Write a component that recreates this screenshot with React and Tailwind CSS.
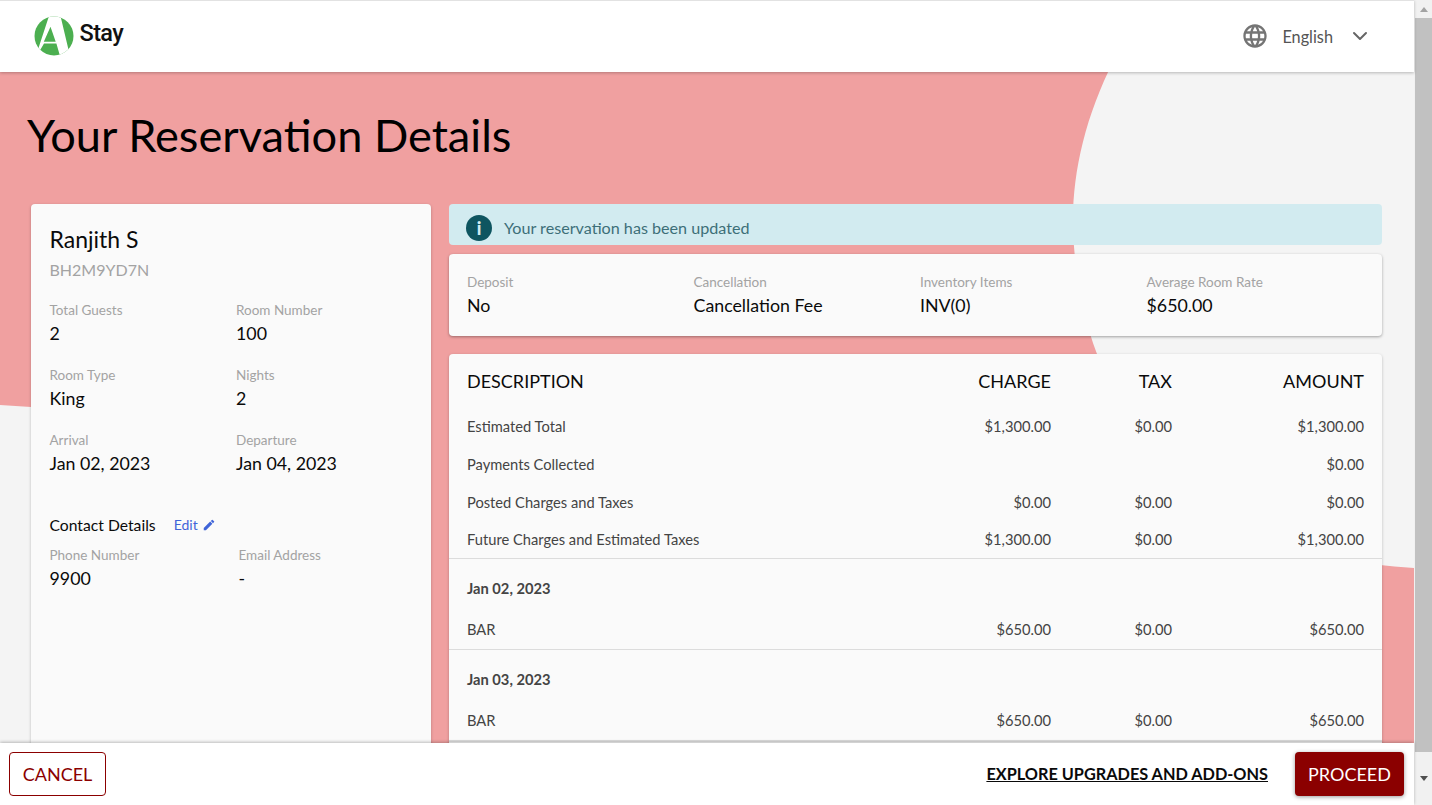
import { ChevronDown } from 'lucide-react'
import { MdEdit, MdLanguage } from 'react-icons/md'

const totals = [
  { label: 'Estimated Total', charge: '$1,300.00', tax: '$0.00', amount: '$1,300.00' },
  { label: 'Payments Collected', charge: '', tax: '', amount: '$0.00' },
  { label: 'Posted Charges and Taxes', charge: '$0.00', tax: '$0.00', amount: '$0.00' },
  { label: 'Future Charges and Estimated Taxes', charge: '$1,300.00', tax: '$0.00', amount: '$1,300.00' },
]

const days = ['Jan 02, 2023', 'Jan 03, 2023']

const summary = [
  { label: 'Deposit', value: 'No' },
  { label: 'Cancellation', value: 'Cancellation Fee' },
  { label: 'Inventory Items', value: 'INV(0)' },
  { label: 'Average Room Rate', value: '$650.00' },
]

function Field({ label, value, className = '' }) {
  return (
    <div className={className}>
      <div className="text-[13.5px] leading-[18px] text-[#a3a3a3]">{label}</div>
      <div className="mt-[1px] text-[17.8px] leading-[27px] text-[#0a0a0a]">{value}</div>
    </div>
  )
}

function Row({ label, charge, tax, amount }) {
  return (
    <div className="grid grid-cols-[1fr_140px_121px_192px] text-[14.7px] leading-[22px] text-[#444]">
      <div>{label}</div>
      <div className="text-right">{charge}</div>
      <div className="text-right">{tax}</div>
      <div className="text-right">{amount}</div>
    </div>
  )
}

function Logo() {
  return (
    <svg width="40" height="40" viewBox="0 0 40 40">
      <defs>
        <clipPath id="logo-disc">
          <circle cx="20" cy="20" r="19.5" />
        </clipPath>
      </defs>
      <circle cx="20" cy="20" r="19.5" fill="#4caf50" />
      <path
        clipPath="url(#logo-disc)"
        d="M15 0 L26.5 0 L36 40 L26 40 L22.4 27.5 L10 27.5 L5.6 35 L4.5 32 Z M16.5 10.7 L9.8 25.7 L21.7 25.7 Z"
        fill="#fff"
        fillRule="evenodd"
      />
    </svg>
  )
}

export default function App() {
  return (
    <div className="flex h-[805px] w-[1432px] overflow-hidden bg-[#f4f4f4] font-['Lato','Liberation_Sans',sans-serif]">
      <div className="relative flex w-[1414px] flex-col">
        <svg className="absolute left-0 top-0" width="1414" height="805" viewBox="0 0 1414 805">
          <path
            d="M0 60 H1114 C1086 115 1073 170 1073 220 C1073 270 1084 320 1097 354 C1140 480 1260 560 1414 568 V805 H31 V407 L0 405 Z"
            fill="#f0a0a0"
          />
        </svg>

        <header className="relative z-10 flex h-[72px] items-center justify-between border-t border-[#e2e2e2] bg-white pb-[2px] pl-[33.5px] pr-[42px] shadow-[0_1px_3px_rgba(0,0,0,0.25)]">
          <div className="flex items-center gap-[6px]">
            <Logo />
            <span className="mb-[3px] font-['Roboto',sans-serif] text-[23.5px] font-medium tracking-[-0.6px] text-[#111]">Stay</span>
          </div>
          <div className="flex items-center">
            <MdLanguage size={28} className="text-[#757575]" />
            <span className="ml-[13.5px] mt-[3px] text-[16.3px] text-[#555]">English</span>
            <ChevronDown size={24} strokeWidth={2} className="ml-[15px] text-[#666]" />
          </div>
        </header>

        <div className="relative min-h-0 flex-1 overflow-hidden">
          <h1 className="pl-[27px] pt-[31px] text-[45.2px] font-normal leading-[64px] text-black">Your Reservation Details</h1>

          <div className="mt-[37px] flex items-start gap-[18px] pl-[31px] pr-[32px]">
            <div className="h-[600px] w-[400px] shrink-0 rounded bg-[#fafafa] pl-[18.5px] pr-[18px] pt-[21px] shadow-[0_1px_3px_rgba(0,0,0,0.25)]">
              <div className="text-[23px] leading-[28px] text-[#0a0a0a]">Ranjith S</div>
              <div className="mt-[5px] text-[16px] leading-[24px] text-[#a3a3a3]">BH2M9YD7N</div>
              <div className="mt-[19px] grid grid-cols-[186.5px_1fr] gap-y-[19px]">
                <Field label="Total Guests" value="2" />
                <Field label="Room Number" value="100" />
                <Field label="Room Type" value="King" />
                <Field label="Nights" value="2" />
                <Field label="Arrival" value="Jan 02, 2023" />
                <Field label="Departure" value="Jan 04, 2023" />
              </div>
              <div className="mt-[37px] flex items-center">
                <span className="text-[15.7px] leading-[22px] text-[#0a0a0a]">Contact Details</span>
                <span className="ml-[18px] text-[14px] leading-[22px] text-[#3f64d8]">Edit</span>
                <MdEdit size={14} className="ml-[4px] text-[#3f64d8]" />
              </div>
              <div className="mt-[10px] grid grid-cols-[189px_1fr]">
                <Field label="Phone Number" value="9900" />
                <Field label="Email Address" value="-" />
              </div>
            </div>

            <div className="min-w-0 flex-1">
              <div className="flex h-[41px] items-center rounded bg-[#d2ebf0] pl-[17px] pt-[7px]">
                <div className="flex h-[26px] w-[26px] items-center justify-center rounded-full bg-[#0e5560] text-[18px] font-black text-[#d2ebf0]">i</div>
                <span className="ml-[12px] text-[16.15px] text-[#3d6f78]">Your reservation has been updated</span>
              </div>

              <div className="mt-[9px] grid h-[82px] grid-cols-[226.5px_226.5px_226.5px_1fr] rounded bg-[#fafafa] px-[18px] pt-[18.5px] shadow-[0_1px_3px_rgba(0,0,0,0.35)]">
                {summary.map((s) => (
                  <Field key={s.label} label={s.label} value={s.value} />
                ))}
              </div>

              <div className="mt-[18px] h-[500px] rounded bg-[#fafafa] pt-[15px] shadow-[0_1px_3px_rgba(0,0,0,0.25)]">
                <div className="grid grid-cols-[1fr_140px_121px_192px] px-[18px] text-[18px] leading-[24px] text-[#0a0a0a]">
                  <div>DESCRIPTION</div>
                  <div className="text-right">CHARGE</div>
                  <div className="text-right">TAX</div>
                  <div className="text-right">AMOUNT</div>
                </div>
                <div className="mt-[22.4px] flex flex-col gap-[15.7px] px-[18px]">
                  {totals.map((r) => (
                    <Row key={r.label} {...r} />
                  ))}
                </div>
                <div className="mt-[7.5px]">
                  {days.map((d) => (
                    <div key={d} className="h-[91px] border-t border-[#dcdcdc] px-[18px] pt-[18px]">
                      <div className="text-[14.7px] font-bold leading-[22px] text-[#444]">{d}</div>
                      <div className="mt-[19px]">
                        <Row label="BAR" charge="$650.00" tax="$0.00" amount="$650.00" />
                      </div>
                    </div>
                  ))}
                  <div className="border-t-2 border-[#dcdcdc]" />
                </div>
              </div>
            </div>
          </div>
        </div>

        <footer className="relative z-10 flex h-[62px] items-center justify-between bg-white pb-[1px] pl-[9px] pr-[10px] shadow-[0_-1px_3px_rgba(0,0,0,0.25)]">
          <button className="h-[44px] w-[97px] rounded border border-[#8b0000] pt-[1px] text-[18px] text-[#8b0000]">CANCEL</button>
          <div className="flex items-center">
            <a className="pt-[2px] text-[16.3px] font-bold text-[#0a0a0a] underline">EXPLORE UPGRADES AND ADD-ONS</a>
            <button className="ml-[27px] h-[44px] w-[109px] rounded bg-[#8b0000] pt-[1px] text-[18px] text-white shadow-[0_1px_4px_rgba(0,0,0,0.4)]">PROCEED</button>
          </div>
        </footer>
      </div>

      <div className="flex w-[18px] shrink-0 flex-col bg-[#f1f1f1] pl-[1px]">
        <div className="flex h-[18px] items-center justify-center">
          <div className="h-0 w-0 border-x-[4px] border-b-[5px] border-x-transparent border-b-[#a3a3a3]" />
        </div>
        <div className="h-[734px] w-[17px] bg-[#c1c1c1]" />
        <div className="flex flex-1 items-center justify-center">
          <div className="h-0 w-0 border-x-[4px] border-t-[5px] border-x-transparent border-t-[#505050]" />
        </div>
      </div>
    </div>
  )
}
